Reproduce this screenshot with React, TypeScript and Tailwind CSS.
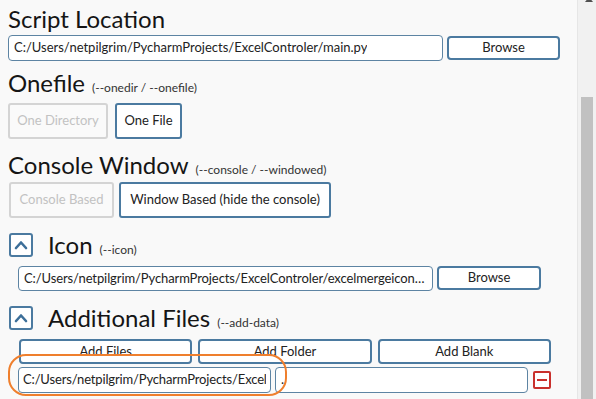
import { ReactNode } from "react";

const font = { fontFamily: "Lato, 'Open Sans', sans-serif" };

function Heading({ title, hint, className = "" }: { title: string; hint?: string; className?: string }) {
  return (
    <div className={`flex h-[28px] items-baseline gap-[7px] ${className}`}>
      <span className="text-[24px] leading-[28px] text-[#151515]">{title}</span>
      {hint && <span className="text-[12px] leading-none text-[#333]">{hint}</span>}
    </div>
  );
}

function TextInput({ value, className = "", clip }: { value: string; className?: string; clip?: boolean }) {
  return (
    <div
      className={`flex items-center rounded-[4px] border border-[#5d84a3] bg-white text-[13px] text-[#222] ${
        clip ? "px-[4px] tracking-[-0.15px]" : "px-[5px]"
      } ${className}`}
    >
      <span className={`overflow-hidden whitespace-nowrap ${clip ? "text-clip" : "text-ellipsis"}`}>{value}</span>
    </div>
  );
}

function Btn({ children, className = "" }: { children: ReactNode; className?: string }) {
  return (
    <button
      className={`flex items-center justify-center rounded-[4px] border-2 border-[#4b7aa0] bg-white text-[13px] text-[#222] ${className}`}
    >
      {children}
    </button>
  );
}

function Toggle({ label, active, className = "" }: { label: string; active?: boolean; className?: string }) {
  return (
    <button
      className={`h-[36px] whitespace-nowrap rounded-[3px] border-2 text-[13px] ${
        active ? "border-[#4b7aa0] text-[#222] bg-white" : "border-[#d4d4d4] text-[#c2c2c2] bg-[#fafafa]"
      } ${className}`}
    >
      {label}
    </button>
  );
}

function Chevron() {
  return (
    <div className="flex h-[24px] w-[24px] items-center justify-center rounded-[3px] border-2 border-[#4b7aa0] bg-white">
      <svg width="14" height="14" viewBox="0 0 14 14" fill="none">
        <path d="M2 10 L7 4.5 L12 10" stroke="#3d6f99" strokeWidth="2.6" strokeLinecap="round" strokeLinejoin="round" />
      </svg>
    </div>
  );
}

function Section({ title, hint }: { title: string; hint: string }) {
  return (
    <div className="flex h-[24px] items-center">
      <Chevron />
      <div className="ml-[15px] flex items-baseline gap-[7px]">
        <span className="text-[24px] leading-[24px] text-[#151515]">{title}</span>
        <span className="text-[12px] leading-none text-[#333]">{hint}</span>
      </div>
    </div>
  );
}

export default function App() {
  return (
    <div className="flex h-[399px] w-[596px] overflow-hidden bg-[#f9f9f9]" style={font}>
      <div className="relative w-[577px] pl-[8px] pt-[5px]">
        <Heading title="Script Location" />
        <div className="mt-[2px] flex w-[552px] gap-[4px]">
          <TextInput value="C:/Users/netpilgrim/PycharmProjects/ExcelControler/main.py" className="h-[26px] w-[435px]" />
          <Btn className="mt-[1px] h-[24px] w-[113px]">Browse</Btn>
        </div>

        <Heading title="Onefile" hint="(--onedir / --onefile)" className="mt-[8px] mb-[6px]" />
        <div className="flex gap-[7px]">
          <Toggle label="One Directory" className="w-[100px]" />
          <Toggle label="One File" active className="w-[67px]" />
        </div>

        <Heading title="Console Window" hint="(--console / --windowed)" className="mt-[12px] mb-[3px]" />
        <div className="flex gap-[5px] pl-[1px]">
          <Toggle label="Console Based" className="w-[105px]" />
          <Toggle label="Window Based (hide the console)" active className="w-[212px]" />
        </div>

        <div className="mt-[15px] pl-[1px]">
          <Section title="Icon" hint="(--icon)" />
        </div>
        <div className="mt-[9px] flex w-[533px] gap-[4px] pl-[10px]">
          <TextInput
            value="C:/Users/netpilgrim/PycharmProjects/ExcelControler/excelmergeicon_9.ico"
            className="h-[25px] w-[415px] tracking-[-0.1px]"
          />
          <Btn className="h-[24px] w-[114px]">Browse</Btn>
        </div>

        <div className="mt-[15px] pl-[1px]">
          <Section title="Additional Files" hint="(--add-data)" />
        </div>
        <div className="mt-[9px] ml-[11px] grid w-[532px] grid-cols-3 gap-[6px]">
          <Btn className="h-[25px]">Add Files</Btn>
          <Btn className="h-[25px]">Add Folder</Btn>
          <Btn className="h-[25px]">Add Blank</Btn>
        </div>
        <div className="mt-[3px] ml-[10px] flex w-[533px] items-center">
          <TextInput value="C:/Users/netpilgrim/PycharmProjects/Excel" clip className="h-[26px] w-[253px]" />
          <TextInput value="." className="ml-[4px] h-[26px] w-[253px]" />
          <div className="ml-[5px] flex h-[18px] w-[18px] items-center justify-center rounded-[2px] border-2 border-[#c9302c] bg-white">
            <div className="h-[2px] w-[10px] bg-[#c9302c]" />
          </div>
        </div>

        {/* annotation drawn over the screenshot */}
        <div className="absolute left-[8px] top-[354px] h-[42px] w-[279px] rounded-[18px] border-2 border-[#ef7f2d]" />
      </div>

      <div className="relative w-[19px] border-l border-[#e6e6e6] bg-[#f1f1f1]">
        <div className="absolute left-[7px] top-[-3px] h-0 w-0 border-x-[4px] border-b-[5px] border-x-transparent border-b-[#505050]" />
        <div className="absolute left-[3px] top-[97px] h-[310px] w-[12px] bg-[#c1c1c1]" />
      </div>
    </div>
  );
}
